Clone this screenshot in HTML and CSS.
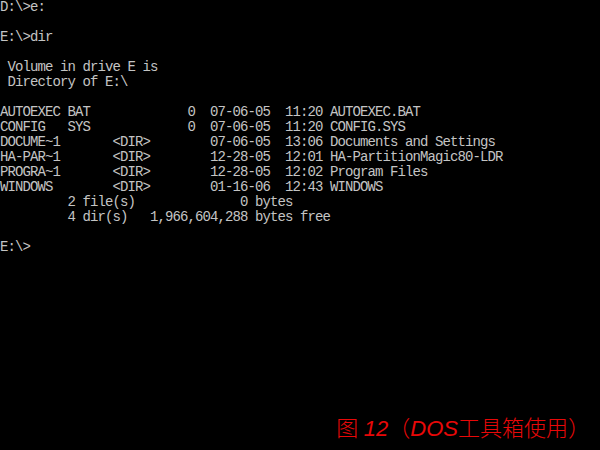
FILE: index.html
```html
<!DOCTYPE html>
<html>
<head>
	<title>DOS</title>
	<link rel="stylesheet" href="styles.css">
</head>
<body>
	<div class="screen">
<pre class="console">D:\&gt;e:

E:\&gt;dir

 Volume in drive E is
 Directory of E:\

AUTOEXEC BAT             0  07-06-05  11:20 AUTOEXEC.BAT
CONFIG   SYS             0  07-06-05  11:20 CONFIG.SYS
DOCUME~1       &lt;DIR&gt;        07-06-05  13:06 Documents and Settings
HA-PAR~1       &lt;DIR&gt;        12-28-05  12:01 HA-PartitionMagic80-LDR
PROGRA~1       &lt;DIR&gt;        12-28-05  12:02 Program Files
WINDOWS        &lt;DIR&gt;        01-16-06  12:43 WINDOWS
         2 file(s)              0 bytes
         4 dir(s)   1,966,604,288 bytes free

E:\&gt;</pre>
		<div class="caption"><span class="caption_cn">图</span> <span class="caption_num">12</span><span class="caption_cn">（</span><span class="caption_num">DOS</span><span class="caption_cn">工具箱使用）</span></div>
	</div>
</body>
</html>
```

FILE: styles.css
```css
html, body{
	margin: 0;
	padding: 0;
	background-color: #000;
}
.screen{
	width: 600px;
	height: 450px;
	display: flex;
	flex-direction: column;
	background-color: #000;
	overflow: hidden;
}
.console{
	margin: 0;
	font-family: "Liberation Mono", "DejaVu Sans Mono", monospace;
	font-size: 14px;
	letter-spacing: -0.9px;
	line-height: 15px;
	color: #c4c4c4;
	white-space: pre;
}
.caption{
	margin-top: auto;
	margin-bottom: 8px;
	margin-right: 10px;
	align-self: flex-end;
	color: #e80808;
	font-size: 22px;
	line-height: 26px;
	white-space: nowrap;
}
.caption_cn{
	font-family: "Noto Sans CJK SC", sans-serif;
	font-weight: 300;
}
.caption_num{
	font-family: "Liberation Sans", sans-serif;
	font-style: italic;
}
```
